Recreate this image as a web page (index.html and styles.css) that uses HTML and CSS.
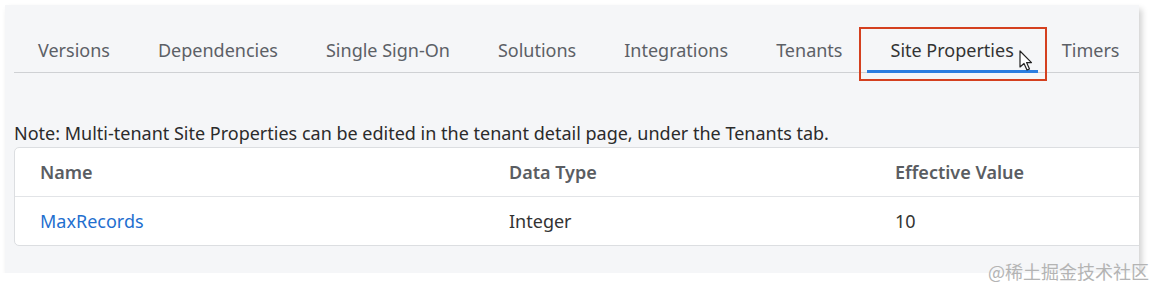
FILE: index.html
```html
<!DOCTYPE html>
<html>
  <head>
    <meta charset="UTF-8" />
    <title>Site Properties</title>
    <link rel="stylesheet" href="styles.css">
  </head>
  <body>
    <div class="panel">
      <div class="tabs">
        <div class="tab">Versions</div>
        <div class="tab">Dependencies</div>
        <div class="tab">Single Sign-On</div>
        <div class="tab">Solutions</div>
        <div class="tab">Integrations</div>
        <div class="tab">Tenants</div>
        <div class="tab active">Site Properties</div>
        <div class="tab">Timers</div>
      </div>

      <p class="note">Note: Multi-tenant Site Properties can be edited in the tenant detail page, under the Tenants tab.</p>

      <div class="table">
        <div class="row head">
          <div class="cell">Name</div>
          <div class="cell">Data Type</div>
          <div class="cell">Effective Value</div>
        </div>
        <div class="row">
          <div class="cell"><a class="link" href="#">MaxRecords</a></div>
          <div class="cell">Integer</div>
          <div class="cell">10</div>
        </div>
      </div>
    </div>

    <!-- highlight box and mouse pointer from the screenshot -->
    <div class="highlight"></div>
    <svg class="cursor" width="16" height="22" viewBox="0 0 16 22">
      <path d="M1 1 L1 17 L5 13.5 L8 20 L10.5 19 L7.6 12.6 L12.5 12.6 Z" fill="#fff" stroke="#222" stroke-width="1.2" stroke-linejoin="round" />
    </svg>

    <div class="watermark">@稀土掘金技术社区</div>
  </body>
</html>
```

FILE: styles.css
```css
/* page and panel */
body {
  margin: 0;
  padding: 0;
  background: #ffffff;
  font-family: "Noto Sans", "Open Sans", Arial, sans-serif;
  color: #333333;
}
.panel {
  margin: 5px 0 0 5px;
  width: 1134px;
  height: 268px;
  padding: 23px 0 0 9px;
  box-sizing: border-box;
  background: #f5f6f8;
  box-shadow: 3px 4px 6px rgba(0, 0, 0, 0.18);
  overflow: hidden;
}

/* tabs */
.tabs {
  display: flex;
  border-bottom: 1px solid #cfd1d4;
}
.tab {
  flex-shrink: 0;
  white-space: nowrap;
  padding: 10px 24px 8px;
  font-size: 18px;
  line-height: 24px;
  color: #5c6066;
  border-bottom: 3px solid transparent;
  margin-bottom: -1px;
}
.tab.active {
  color: #333333;
  border-bottom-color: #2b7de0;
}

/* note */
.note {
  margin: 48px 0 0;
  font-size: 18px;
  line-height: 24px;
  color: #2b2b2b;
}

/* table */
.table {
  margin-top: 2px;
  width: 1160px;
  background: #ffffff;
  border: 1px solid #dcdee1;
  border-radius: 5px;
}
.row {
  display: grid;
  grid-template-columns: 469px 386px 1fr;
  border-top: 1px solid #e2e4e7;
}
.row.head {
  border-top: none;
}
.cell {
  padding: 12px 25px;
  font-size: 18px;
  line-height: 24px;
  color: #333333;
}
.head .cell {
  font-weight: 600;
  color: #5a5d62;
}
.link {
  color: #1f6fcf;
  text-decoration: none;
}

/* overlays */
.highlight {
  position: absolute;
  left: 859px;
  top: 27px;
  width: 184px;
  height: 50px;
  border: 2px solid #d4401f;
}
.cursor {
  position: absolute;
  left: 1019px;
  top: 50px;
}
.watermark {
  position: absolute;
  left: 988px;
  top: 259px;
  font-family: "Noto Sans CJK SC", sans-serif;
  font-size: 18px;
  line-height: 24px;
  color: #b4b4b4;
}
```
